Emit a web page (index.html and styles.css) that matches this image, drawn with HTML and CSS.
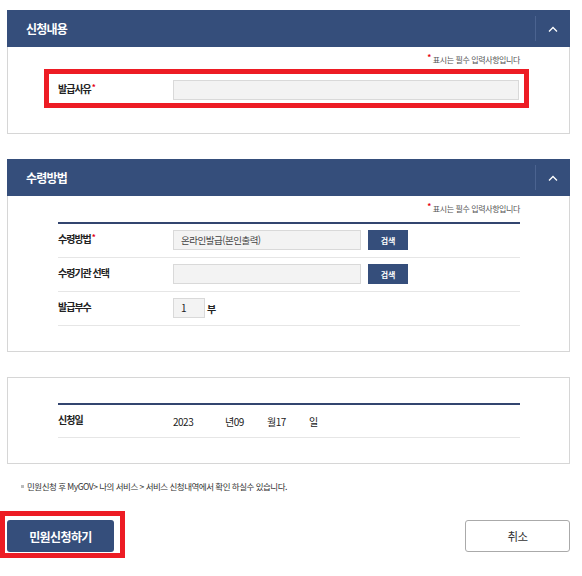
FILE: index.html
```html
<!DOCTYPE html>
<html lang="ko">
<head>
    <meta charset="UTF-8">
    <meta name="viewport" content="width=device-width, initial-scale=1.0">
    <title>민원신청</title>
    <link rel="stylesheet" href="styles.css">
</head>
<body>
    <div class="panel">
        <div class="panel-head">
            <h2>신청내용</h2>
            <span class="toggle"><svg width="10" height="6" viewBox="0 0 10 6"><path d="M1 5.5 L5 1.5 L9 5.5" fill="none" stroke="#fff" stroke-width="1.3"/></svg></span>
        </div>
        <div class="panel-body">
            <p class="req"><span class="star">*</span> 표시는 필수 입력사항입니다</p>
            <div class="mark mark-row">
                <div class="row">
                    <div class="label">발급사유<span class="star">*</span></div>
                    <div class="field"><div class="input input-wide"></div></div>
                </div>
            </div>
        </div>
    </div>

    <div class="panel">
        <div class="panel-head">
            <h2>수령방법</h2>
            <span class="toggle"><svg width="10" height="6" viewBox="0 0 10 6"><path d="M1 5.5 L5 1.5 L9 5.5" fill="none" stroke="#fff" stroke-width="1.3"/></svg></span>
        </div>
        <div class="panel-body">
            <p class="req"><span class="star">*</span> 표시는 필수 입력사항입니다</p>
            <div class="table">
                <div class="row">
                    <div class="label">수령방법<span class="star">*</span></div>
                    <div class="field">
                        <div class="input">온라인발급(본인출력)</div>
                        <span class="btn-small">검색</span>
                    </div>
                </div>
                <div class="row">
                    <div class="label">수령기관 선택</div>
                    <div class="field">
                        <div class="input"></div>
                        <span class="btn-small">검색</span>
                    </div>
                </div>
                <div class="row">
                    <div class="label">발급부수</div>
                    <div class="field">
                        <div class="input input-num">1</div>
                        <span class="unit">부</span>
                    </div>
                </div>
            </div>
        </div>
    </div>

    <div class="panel panel-last">
        <div class="panel-body panel-plain">
            <div class="table">
                <div class="row">
                    <div class="label">신청일</div>
                    <div class="field date">
                        <span class="d-year">2023</span>
                        <span class="d-part">년09</span>
                        <span class="d-part">월17</span>
                        <span>일</span>
                    </div>
                </div>
            </div>
        </div>
    </div>

    <p class="notice">민원신청 후 MyGOV&gt; 나의 서비스 &gt; 서비스 신청내역에서 확인 하실수 있습니다.</p>

    <div class="actions">
        <div class="mark mark-btn">
            <span class="btn btn-primary">민원신청하기</span>
        </div>
        <span class="btn btn-cancel">취소</span>
    </div>
</body>
</html>
```

FILE: styles.css
```css
body {
    margin: 0;
    padding: 10px 12px 0 7px;
    font-family: "Noto Sans CJK KR", "Noto Sans", sans-serif;
    color: #222;
    background-color: #fff;
}
.panel {
    margin-bottom: 25px;
}
.panel-last {
    margin-bottom: 0;
}
.panel-head {
    display: flex;
    align-items: center;
    justify-content: space-between;
    height: 37px;
    padding-left: 19px;
    background-color: #354e7b;
}
.panel-head h2 {
    margin: 0;
    color: #fff;
    font-size: 12px;
    font-weight: bold;
    letter-spacing: -0.8px;
}
.toggle {
    display: flex;
    align-items: center;
    justify-content: center;
    width: 34px;
    height: 25px;
    border-left: 1px solid #4b6390;
}
.panel-body {
    border: 1px solid #d6d6d6;
    border-top: 0;
    padding: 6px 49px 25px 50px;
}
.panel-plain {
    border-top: 1px solid #d6d6d6;
    padding-top: 25px;
}
.req {
    margin: 0;
    text-align: right;
    font-size: 8px;
    line-height: 14px;
    color: #555;
    letter-spacing: -0.4px;
}
.star {
    color: #e60012;
    font-weight: bold;
    font-size: 8px;
    line-height: 0;
    vertical-align: 3px;
}
.label .star {
    margin-left: 1px;
}
.mark {
    border: 5px solid #ed1c24;
}
.mark-row {
    margin: 2px -9px 0 -14px;
}
.mark-row .row {
    padding: 6px 5px 3px 9px;
    border-bottom: 0;
}
.table {
    margin-top: 6px;
    border-top: 2px solid #33456f;
}
.row {
    display: flex;
    align-items: center;
    padding: 6px 0 7px;
    border-bottom: 1px solid #e6e6e6;
}
.panel-plain .table {
    margin-top: 0;
}
.panel-plain .row {
    height: 32px;
    padding: 0;
}
.label {
    width: 115px;
    flex-shrink: 0;
    font-size: 10px;
    line-height: 14px;
    font-weight: bold;
    letter-spacing: -1px;
    margin-top: -3px;
}
.field {
    display: flex;
    align-items: center;
    flex: 1;
    gap: 7px;
}
.input {
    box-sizing: border-box;
    width: 188px;
    height: 20px;
    padding-left: 7px;
    background-color: #f3f3f3;
    border: 1px solid #d9d9d9;
    font-size: 9.5px;
    line-height: 18px;
    color: #444;
    letter-spacing: -0.5px;
}
.input-wide {
    width: 100%;
}
.input-num {
    width: 32px;
    font-size: 10px;
    color: #222;
}
.unit {
    margin-left: -5px;
    font-size: 10px;
    font-weight: bold;
}
.btn-small {
    display: inline-flex;
    align-items: center;
    justify-content: center;
    width: 40px;
    height: 20px;
    background-color: #354e7b;
    color: #fff;
    font-size: 8px;
    font-weight: bold;
}
.date {
    gap: 0;
    font-size: 10px;
    letter-spacing: -0.5px;
}
.d-year {
    width: 52px;
}
.d-part {
    width: 42px;
}
.notice {
    display: flex;
    align-items: center;
    margin: 16px 0 0;
    padding-left: 14px;
    font-size: 8.5px;
    line-height: 12px;
    color: #333;
    letter-spacing: -0.5px;
}
.notice:before {
    content: "";
    width: 3px;
    height: 3px;
    margin-right: 3px;
    background-color: #bbb;
}
.actions {
    display: flex;
    justify-content: space-between;
    align-items: flex-start;
    margin-top: 19px;
}
.mark-btn {
    margin-left: -7px;
    padding: 4px 6px 1px 2px;
}
.btn {
    display: flex;
    align-items: center;
    justify-content: center;
    box-sizing: border-box;
    height: 32px;
    border-radius: 3px;
    font-size: 11.5px;
    letter-spacing: -0.6px;
}
.btn-primary {
    width: 107px;
    background-color: #354e7b;
    color: #fff;
    font-size: 12px;
    font-weight: bold;
}
.btn-cancel {
    width: 105px;
    margin-top: 9px;
    border: 1px solid #aaa;
    color: #333;
}
```
